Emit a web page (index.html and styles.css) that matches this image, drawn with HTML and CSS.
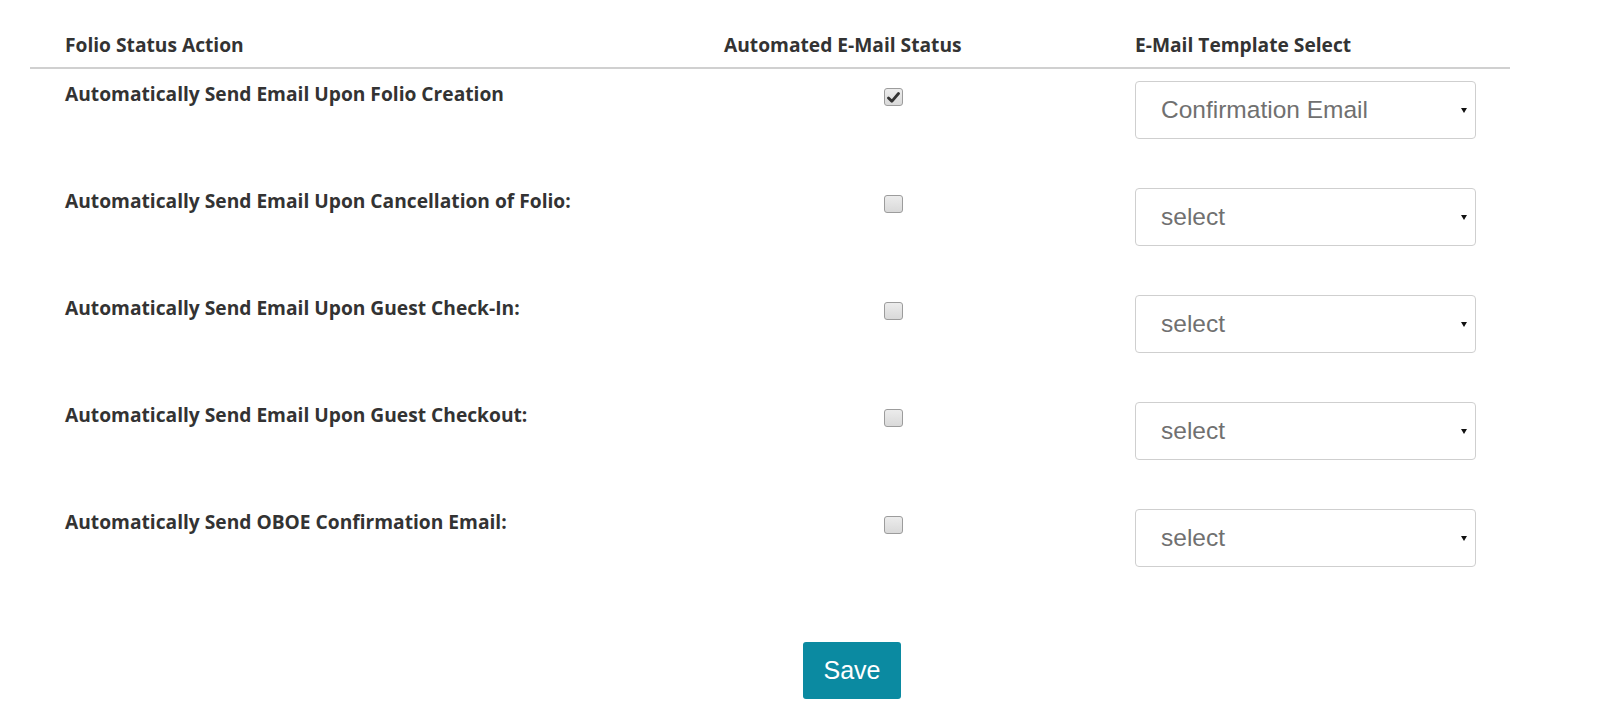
FILE: index.html
```html
<!DOCTYPE html>
<html>
<head>
<meta charset="utf-8">
<link rel="stylesheet" href="styles.css">
</head>
<body>
<div class="table">
  <div class="head">
    <div class="col1">Folio Status Action</div>
    <div class="col2">Automated E-Mail Status</div>
    <div class="col3">E-Mail Template Select</div>
  </div>
  <div class="row">
    <div class="col1 label">Automatically Send Email Upon Folio Creation</div>
    <div class="col2"><span class="cb checked"><svg width="13" height="11" viewBox="0 0 13 11"><path d="M1.5 6 L4.8 9.3 L11.5 1.5" fill="none" stroke="#333" stroke-width="2.8" stroke-linecap="round" stroke-linejoin="round"/></svg></span></div>
    <div class="col3"><div class="select">Confirmation Email<span class="arrow"></span></div></div>
  </div>
  <div class="row">
    <div class="col1 label">Automatically Send Email Upon Cancellation of Folio:</div>
    <div class="col2"><span class="cb"></span></div>
    <div class="col3"><div class="select">select<span class="arrow"></span></div></div>
  </div>
  <div class="row">
    <div class="col1 label">Automatically Send Email Upon Guest Check-In:</div>
    <div class="col2"><span class="cb"></span></div>
    <div class="col3"><div class="select">select<span class="arrow"></span></div></div>
  </div>
  <div class="row">
    <div class="col1 label">Automatically Send Email Upon Guest Checkout:</div>
    <div class="col2"><span class="cb"></span></div>
    <div class="col3"><div class="select">select<span class="arrow"></span></div></div>
  </div>
  <div class="row">
    <div class="col1 label">Automatically Send OBOE Confirmation Email:</div>
    <div class="col2"><span class="cb"></span></div>
    <div class="col3"><div class="select">select<span class="arrow"></span></div></div>
  </div>
  <div class="actions">
    <button class="save">Save</button>
  </div>
</div>
</body>
</html>
```

FILE: styles.css
```css
html, body {
  margin: 0;
  padding: 0;
  background: #fff;
}
body {
  font-family: "Open Sans", "Liberation Sans", sans-serif;
  color: #333;
}
.table {
  margin-left: 30px;
  width: 1480px;
}
.head, .row {
  display: grid;
  grid-template-columns: 694px 411px 341px;
}
.head {
  font-weight: 700;
  font-size: 19.2px;
  line-height: 26px;
  padding-top: 32px;
  padding-bottom: 9px;
  border-bottom: 2px solid #d0d0d0;
}
.col1 {
  padding-left: 35px;
}
.row {
  padding-top: 12px;
  height: 95px;
}
.label {
  font-weight: 700;
  font-size: 19.2px;
  line-height: 26px;
}
.row .col2 {
  padding-left: 160px;
  padding-top: 7px;
}
.cb {
  display: flex;
  align-items: center;
  justify-content: center;
  box-sizing: border-box;
  width: 19px;
  height: 18px;
  border: 1px solid #9c9c9c;
  border-radius: 3px;
  background: linear-gradient(#ececec, #d9d9d9);
}
.select {
  position: relative;
  box-sizing: border-box;
  height: 58px;
  width: 341px;
  border: 1px solid #cfcfcf;
  border-radius: 4px;
  padding-left: 25px;
  font-family: "Liberation Sans", Arial, sans-serif;
  font-size: 24.5px;
  line-height: 56px;
  color: #707070;
}
.arrow {
  position: absolute;
  right: 8px;
  top: 26px;
  width: 0;
  height: 0;
  border-left: 3px solid transparent;
  border-right: 3px solid transparent;
  border-top: 5px solid #111;
}
.actions {
  padding-top: 38px;
  padding-left: 773px;
}
.save {
  width: 98px;
  height: 57px;
  border: none;
  border-radius: 3px;
  background: #0b8aa1;
  color: #fff;
  font-family: "Liberation Sans", Arial, sans-serif;
  font-size: 25px;
  padding: 0;
}
```
